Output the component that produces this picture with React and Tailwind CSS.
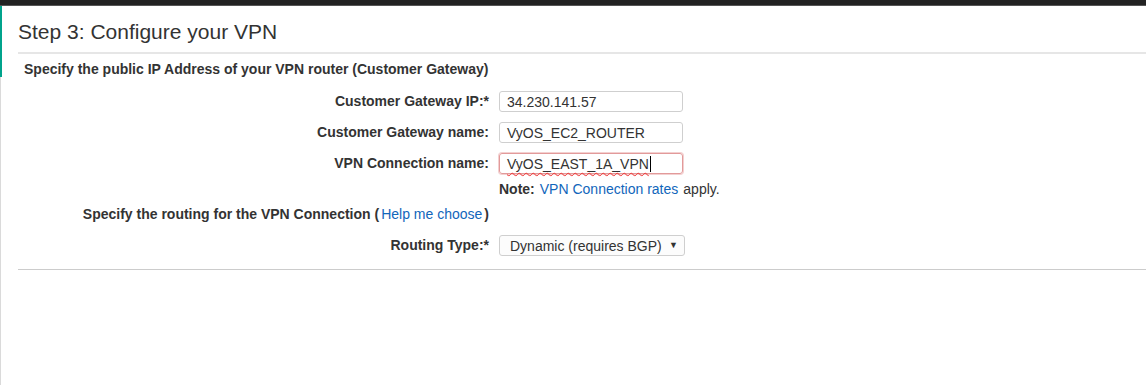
import React from "react";

const font = { fontFamily: '"Liberation Sans", Arial, sans-serif' };

function Field({ children, invalid }) {
  return (
    <div
      className={`flex h-[21px] w-[184px] items-center rounded-[3px] border px-[7px] text-[14px] leading-none text-[#333] ${
        invalid ? "border-[#e29a9a] shadow-[0_0_0_1px_#f3d0d0]" : "border-[#cfcfcf]"
      }`}
    >
      {children}
    </div>
  );
}

function Row({ label, children }) {
  return (
    <>
      <div className="flex items-center justify-end text-[14px] font-bold text-[#333]">{label}</div>
      <div className="flex items-center">{children}</div>
    </>
  );
}

export default function App() {
  return (
    <div className="flex h-[385px] w-[1146px] flex-col bg-white" style={font}>
      <div className="h-[6px] shrink-0 bg-[#222] border-b border-[#555]" />
      <div className="flex flex-1">
        <div className="flex w-[2px] flex-col">
          <div className="h-[71px] bg-[#00a38c]" />
          <div className="flex-1 w-[1px] bg-[#dadada]" />
        </div>
        <div className="flex-1 pl-[16px]">
          <h1 className="pt-[14px] pb-[8px] text-[21px] leading-[24px] text-[#333]">Step 3: Configure your VPN</h1>
          <div className="h-[2px] bg-[#e6e6e6]" />
          <div className="pl-[6px] pt-[7px] text-[14px] font-bold leading-[16px] text-[#333]">
            Specify the public IP Address of your VPN router (Customer Gateway)
          </div>
          <div className="mt-[14px] grid grid-cols-[471px_1fr] gap-x-[10px] gap-y-[10px]">
            <Row label="Customer Gateway IP:*">
              <Field>34.230.141.57</Field>
            </Row>
            <Row label="Customer Gateway name:">
              <Field>VyOS_EC2_ROUTER</Field>
            </Row>
            <Row label="VPN Connection name:">
              <Field invalid>
                <span className="underline decoration-wavy decoration-[#e33] decoration-1 underline-offset-[3px]">
                  VyOS_EAST_1A_VPN
                </span>
                <span className="ml-[1px] h-[16px] w-[1px] bg-black" />
              </Field>
            </Row>
          </div>
          <div className="mt-[7px] grid grid-cols-[471px_1fr] gap-x-[10px]">
            <div />
            <div className="flex items-center gap-[5px] text-[14px] leading-[16px] text-[#333]">
              <span className="font-bold">Note:</span>
              <span className="text-[#1166bb]">VPN Connection rates</span>
              <span>apply.</span>
            </div>
          </div>
          <div className="mt-[9px] grid grid-cols-[471px_1fr] gap-x-[10px]">
            <div className="text-right text-[14px] font-bold leading-[16px] text-[#333]">
              Specify the routing for the VPN Connection (
              <span className="mx-[2px] font-normal text-[#1166bb]">Help me choose</span>)
            </div>
            <div />
          </div>
          <div className="mt-[13px] grid grid-cols-[471px_1fr] gap-x-[10px]">
            <Row label="Routing Type:*">
              <div className="flex h-[21px] w-[186px] items-center justify-between rounded-[3px] border border-[#cfcfcf] bg-[#fcfcfc] pl-[10px] pr-[6px] text-[14px] leading-none text-[#333]">
                <span>Dynamic (requires BGP)</span>
                <span className="text-[9px]">▼</span>
              </div>
            </Row>
          </div>
          <div className="mt-[13px] h-[1px] bg-[#cccccc]" />
        </div>
      </div>
    </div>
  );
}
